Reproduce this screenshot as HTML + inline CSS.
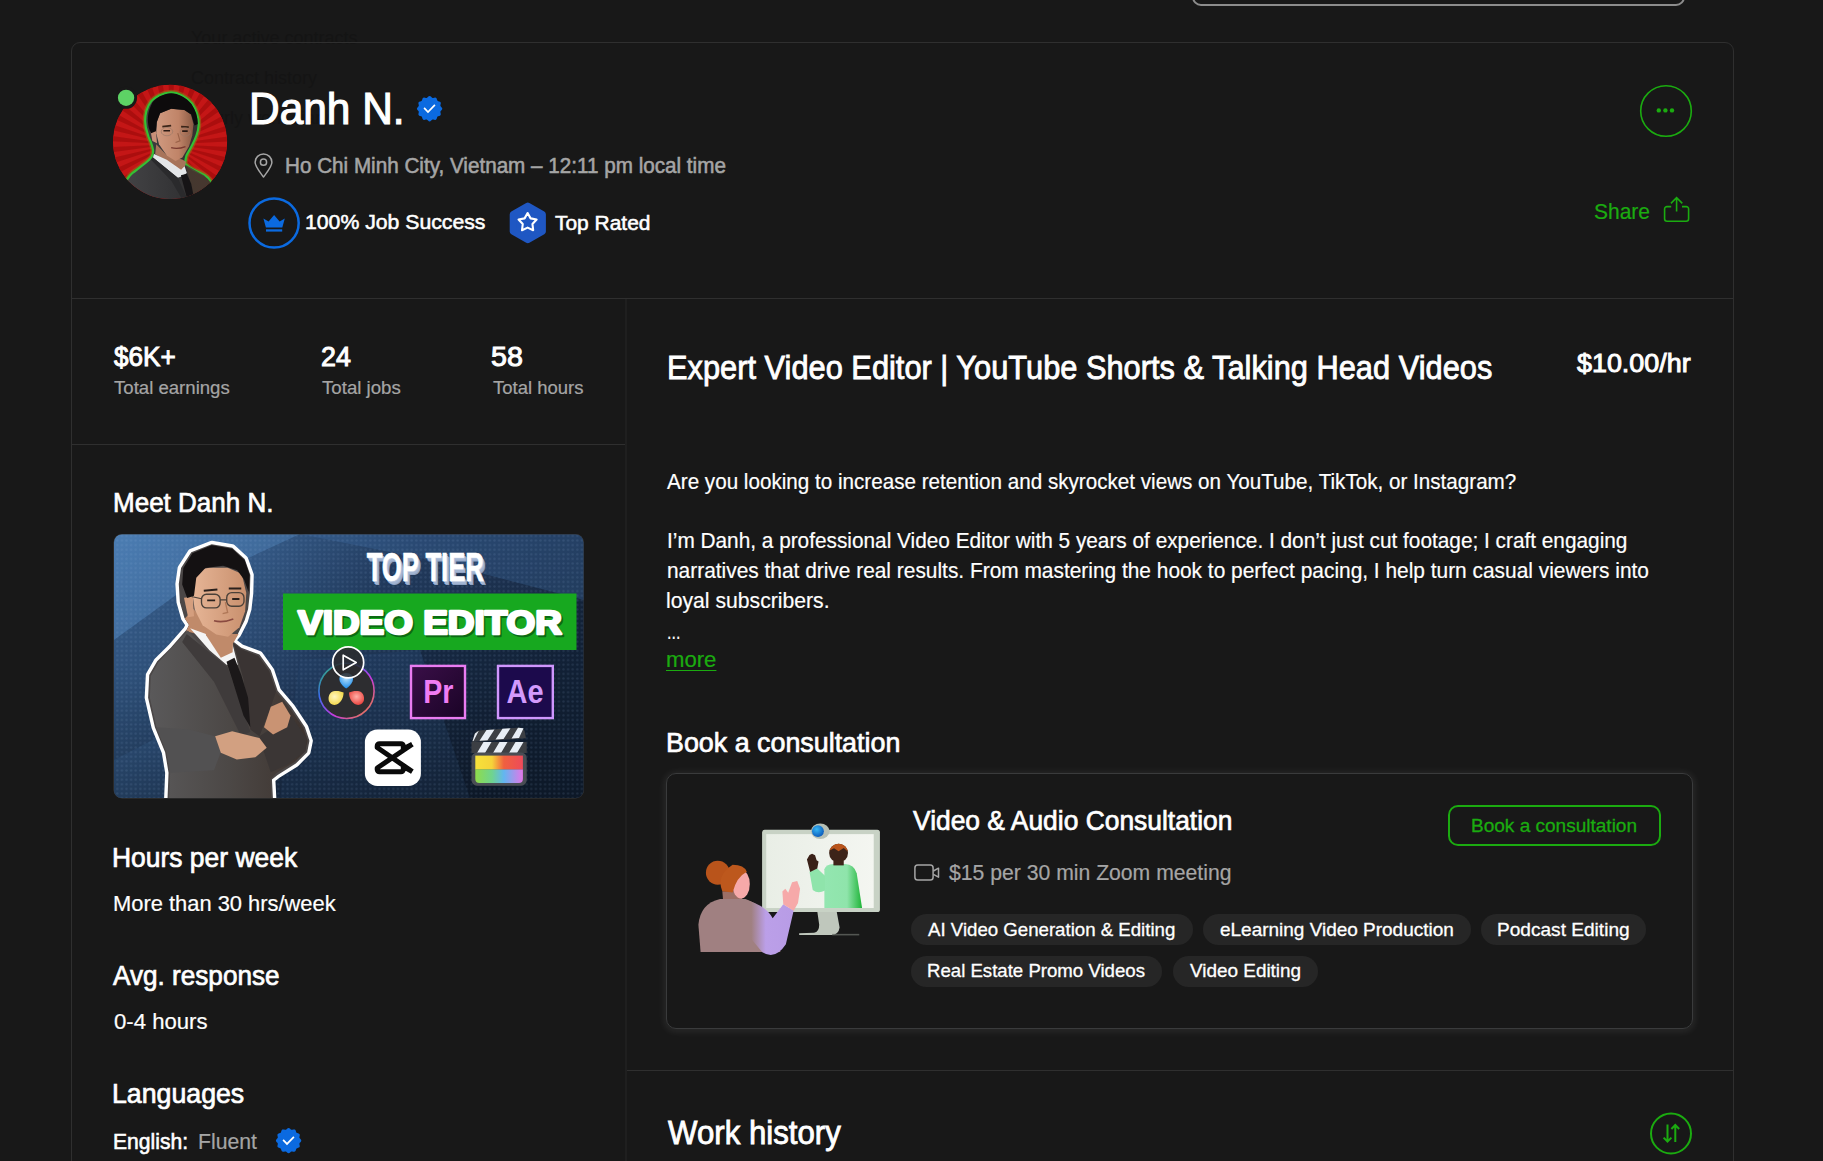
<!DOCTYPE html>
<html lang="en">
<head>
<meta charset="utf-8">
<title>Danh N. – Expert Video Editor</title>
<style>
*{box-sizing:border-box;margin:0;padding:0}
html,body{width:1823px;height:1161px;overflow:hidden;background:#181818}
body{position:relative;font-family:"Liberation Sans",sans-serif;color:#fff;-webkit-font-smoothing:antialiased}
.t{position:absolute;display:block;white-space:nowrap;line-height:1;font-weight:400;transform-origin:0 0}
.abs{position:absolute}
.ghost{position:absolute;white-space:nowrap;line-height:1;color:#141414;font-size:18px}
#search{position:absolute;left:1192px;top:-40px;width:493px;height:46px;border:2px solid #8c8c8c;border-radius:9px}
#card{position:absolute;left:71px;top:42px;width:1663px;height:1200px;border:1px solid #2f2f2f;border-radius:9px}
.hl{position:absolute;height:1px;background:#2f2f2f}
#vl{position:absolute;left:625px;top:299px;width:2px;height:900px;background:#1f1f1f}
.tag{position:absolute;height:31px;border-radius:16px;background:#262626}
#ccard{position:absolute;left:666px;top:773px;width:1027px;height:256px;border:1px solid #3a3b3c;border-radius:10px;box-shadow:0 1px 7px 2px rgba(255,255,255,.075)}
#bbtn{position:absolute;left:1448px;top:805px;width:213px;height:41px;border:2px solid #1bab10;border-radius:10px}
svg{position:absolute;overflow:visible}
</style>
</head>
<body>
<div id="search"></div>
<div class="ghost" style="left:191px;top:29px">Your active contracts</div>
<div class="ghost" style="left:191px;top:69px">Contract history</div>
<div class="ghost" style="left:191px;top:109px">Hourly work diary</div>
<div id="card"></div>
<div class="hl" style="left:72px;top:298px;width:1661px"></div>
<div class="hl" style="left:72px;top:444px;width:553px"></div>
<div class="hl" style="left:627px;top:1070px;width:1106px"></div>
<div id="vl"></div>

<svg width="1823" height="1161" viewBox="0 0 1823 1161" style="left:0;top:0">
<defs><clipPath id="avc"><circle cx="590" cy="580" r="518"/></clipPath><linearGradient id="avsk" x1="0" y1="0" x2="1" y2="0"><stop offset="0" stop-color="#d09a80"/><stop offset=".6" stop-color="#c08468"/><stop offset="1" stop-color="#8a5a44"/></linearGradient><linearGradient id="avsu" x1="0" y1="0" x2="1" y2="0"><stop offset="0" stop-color="#444446"/><stop offset=".6" stop-color="#333335"/><stop offset="1" stop-color="#3a302a"/></linearGradient></defs>
<g transform="translate(105,78) scale(0.11025)">
<g clip-path="url(#avc)">
<circle cx="590" cy="580" r="520" fill="#c41616"/>
<path d="M600 600 L1399 640 L1392 710Z M600 600 L1378 786 L1359 854Z M600 600 L1331 926 L1299 989Z M600 600 L1258 1055 L1216 1111Z M600 600 L1164 1168 L1112 1215Z M600 600 L1050 1262 L990 1299Z M600 600 L920 1333 L855 1358Z M600 600 L780 1379 L711 1392Z M600 600 L634 1399 L564 1399Z M600 600 L486 1392 L417 1379Z M600 600 L343 1358 L277 1332Z M600 600 L208 1297 L148 1260Z M600 600 L87 1214 L35 1166Z M600 600 L-17 1109 L-60 1053Z M600 600 L-100 987 L-132 924Z M600 600 L-159 851 L-179 784Z M600 600 L-193 708 L-199 638Z M600 600 L-199 560 L-192 490Z M600 600 L-178 414 L-159 346Z M600 600 L-131 274 L-99 211Z M600 600 L-58 145 L-16 89Z M600 600 L36 32 L88 -15Z M600 600 L150 -62 L210 -99Z M600 600 L280 -133 L345 -158Z M600 600 L420 -179 L489 -192Z M600 600 L566 -199 L636 -199Z M600 600 L714 -192 L783 -179Z M600 600 L857 -158 L923 -132Z M600 600 L992 -97 L1052 -60Z M600 600 L1113 -14 L1165 34Z M600 600 L1217 91 L1260 147Z M600 600 L1300 213 L1332 276Z M600 600 L1359 349 L1379 416Z M600 600 L1393 492 L1399 562Z" fill="#a50c0c" opacity=".8"/>
<path d="M600 130 C660 130 740 170 790 230 C830 290 850 350 850 420 C848 470 838 500 830 520 C815 560 800 590 790 610 C770 650 750 680 740 700 C728 740 725 760 730 780 C760 810 790 825 800 830 C850 855 880 868 900 880 C935 900 950 920 960 940 L1000 1150 L150 1150 L200 920 C215 895 230 875 250 860 C280 838 300 822 330 800 C370 770 400 745 420 720 C435 700 438 675 435 650 C430 620 422 600 415 580 C400 550 390 525 385 500 C370 460 365 430 365 400 C362 360 368 330 375 300 C385 260 400 235 420 210 C450 175 520 135 600 130Z" fill="none" stroke="#8a7a18" stroke-opacity=".55" stroke-width="46" stroke-linejoin="round"/>
<path d="M600 130 C660 130 740 170 790 230 C830 290 850 350 850 420 C848 470 838 500 830 520 C815 560 800 590 790 610 C770 650 750 680 740 700 C728 740 725 760 730 780 C760 810 790 825 800 830 C850 855 880 868 900 880 C935 900 950 920 960 940 L1000 1150 L150 1150 L200 920 C215 895 230 875 250 860 C280 838 300 822 330 800 C370 770 400 745 420 720 C435 700 438 675 435 650 C430 620 422 600 415 580 C400 550 390 525 385 500 C370 460 365 430 365 400 C362 360 368 330 375 300 C385 260 400 235 420 210 C450 175 520 135 600 130Z" fill="url(#avsu)" stroke="#34c034" stroke-width="20" stroke-linejoin="round"/>
<path d="M735 790 L900 885 L958 945 L900 1100 L800 1080 L760 900Z" fill="#4a3a30" opacity=".8"/>
<path d="M465 600 L560 700 L700 740 L735 760 L725 800 L690 845 L455 690Z" fill="#a8745a"/>
<path d="M445 690 L560 742 L690 832 L722 800 L742 862 L700 892 L660 905 L435 722Z" fill="#e4e6e8"/>
<path d="M688 882 L742 868 L782 960 L802 1062 L742 1085Z" fill="#161416"/>
<path d="M435 722 L660 905 L745 1090 L700 1100 L600 930 L415 740Z" fill="#2a2a2c"/>
<path d="M470 400 L500 320 L600 280 L720 290 L780 330 L802 420 L792 520 L762 620 L702 722 L640 752 L560 702 L490 602 L465 500Z" fill="url(#avsk)"/>
<path d="M413 480 L462 478 L472 592 L430 572Z" fill="#c89078"/>
<path d="M600 138 C660 138 736 176 784 236 C822 292 842 350 842 418 L812 430 L782 332 L720 290 L600 280 L500 320 L470 400 L462 482 L418 500 C400 470 392 440 390 400 C386 340 396 290 430 222 C460 180 525 142 600 138Z" fill="#0d0b0c"/>
<path d="M520 440 L600 432 M690 440 L760 446" stroke="#3a2418" stroke-width="16" fill="none"/>
<path d="M530 478 H590 M700 482 H750" stroke="#2a1a14" stroke-width="14" fill="none"/>
<ellipse cx="562" cy="486" rx="52" ry="38" fill="none" stroke="#9a7a68" stroke-width="6"/>
<ellipse cx="728" cy="490" rx="46" ry="38" fill="none" stroke="#9a7a68" stroke-width="6"/>
<path d="M660 500 L680 570 L640 585" stroke="#9a6248" stroke-width="10" fill="none"/>
<path d="M600 632 Q660 650 730 622" stroke="#7a3a30" stroke-width="12" fill="none"/>
</g>
<circle cx="191" cy="180" r="100" fill="#181818"/>
<circle cx="191" cy="180" r="74" fill="#5dd265"/>
</g></svg>
<svg width="1823" height="1161" viewBox="0 0 1823 1161" style="left:0;top:0">
<path d="M429.60,96.00 L430.42,96.25 L431.16,96.85 L431.83,97.50 L432.50,97.88 L433.27,97.89 L434.17,97.66 L435.12,97.51 L435.95,97.70 L436.53,98.32 L436.87,99.22 L437.13,100.11 L437.52,100.78 L438.19,101.17 L439.08,101.43 L439.98,101.77 L440.60,102.35 L440.79,103.18 L440.64,104.13 L440.41,105.03 L440.42,105.80 L440.80,106.47 L441.45,107.14 L442.05,107.88 L442.30,108.70 L442.05,109.52 L441.45,110.26 L440.80,110.93 L440.42,111.60 L440.41,112.37 L440.64,113.27 L440.79,114.22 L440.60,115.05 L439.98,115.63 L439.08,115.97 L438.19,116.23 L437.52,116.62 L437.13,117.29 L436.87,118.18 L436.53,119.08 L435.95,119.70 L435.12,119.89 L434.17,119.74 L433.27,119.51 L432.50,119.52 L431.83,119.90 L431.16,120.55 L430.42,121.15 L429.60,121.40 L428.78,121.15 L428.04,120.55 L427.37,119.90 L426.70,119.52 L425.93,119.51 L425.03,119.74 L424.08,119.89 L423.25,119.70 L422.67,119.08 L422.33,118.18 L422.07,117.29 L421.68,116.62 L421.01,116.23 L420.12,115.97 L419.22,115.63 L418.60,115.05 L418.41,114.22 L418.56,113.27 L418.79,112.37 L418.78,111.60 L418.40,110.93 L417.75,110.26 L417.15,109.52 L416.90,108.70 L417.15,107.88 L417.75,107.14 L418.40,106.47 L418.78,105.80 L418.79,105.03 L418.56,104.13 L418.41,103.18 L418.60,102.35 L419.22,101.77 L420.12,101.43 L421.01,101.17 L421.68,100.78 L422.07,100.11 L422.33,99.22 L422.67,98.32 L423.25,97.70 L424.08,97.51 L425.03,97.66 L425.93,97.89 L426.70,97.88 L427.37,97.50 L428.04,96.85 L428.78,96.25Z" fill="#0b6ae0"/><path d="M424.10 107.90 L428.00 112.00 L434.90 104.90" fill="none" stroke="#fff" stroke-width="1.7" stroke-linejoin="miter"/>
<path d="M288.60,1127.90 L289.42,1128.15 L290.16,1128.75 L290.83,1129.40 L291.50,1129.78 L292.27,1129.79 L293.17,1129.56 L294.12,1129.41 L294.95,1129.60 L295.53,1130.22 L295.87,1131.12 L296.13,1132.01 L296.52,1132.68 L297.19,1133.07 L298.08,1133.33 L298.98,1133.67 L299.60,1134.25 L299.79,1135.08 L299.64,1136.03 L299.41,1136.93 L299.42,1137.70 L299.80,1138.37 L300.45,1139.04 L301.05,1139.78 L301.30,1140.60 L301.05,1141.42 L300.45,1142.16 L299.80,1142.83 L299.42,1143.50 L299.41,1144.27 L299.64,1145.17 L299.79,1146.12 L299.60,1146.95 L298.98,1147.53 L298.08,1147.87 L297.19,1148.13 L296.52,1148.52 L296.13,1149.19 L295.87,1150.08 L295.53,1150.98 L294.95,1151.60 L294.12,1151.79 L293.17,1151.64 L292.27,1151.41 L291.50,1151.42 L290.83,1151.80 L290.16,1152.45 L289.42,1153.05 L288.60,1153.30 L287.78,1153.05 L287.04,1152.45 L286.37,1151.80 L285.70,1151.42 L284.93,1151.41 L284.03,1151.64 L283.08,1151.79 L282.25,1151.60 L281.67,1150.98 L281.33,1150.08 L281.07,1149.19 L280.68,1148.52 L280.01,1148.13 L279.12,1147.87 L278.22,1147.53 L277.60,1146.95 L277.41,1146.12 L277.56,1145.17 L277.79,1144.27 L277.78,1143.50 L277.40,1142.83 L276.75,1142.16 L276.15,1141.42 L275.90,1140.60 L276.15,1139.78 L276.75,1139.04 L277.40,1138.37 L277.78,1137.70 L277.79,1136.93 L277.56,1136.03 L277.41,1135.08 L277.60,1134.25 L278.22,1133.67 L279.12,1133.33 L280.01,1133.07 L280.68,1132.68 L281.07,1132.01 L281.33,1131.12 L281.67,1130.22 L282.25,1129.60 L283.08,1129.41 L284.03,1129.56 L284.93,1129.79 L285.70,1129.78 L286.37,1129.40 L287.04,1128.75 L287.78,1128.15Z" fill="#0b6ae0"/><path d="M283.10 1139.80 L287.00 1143.90 L293.90 1136.80" fill="none" stroke="#fff" stroke-width="1.7" stroke-linejoin="miter"/>
<path d="M263.5 177 C259.5 171.5 255.1 166.6 255.1 162.3 A8.4 8.4 0 0 1 271.9 162.3 C271.9 166.6 267.5 171.5 263.5 177Z" fill="none" stroke="#a5a5a5" stroke-width="1.5" stroke-linejoin="round"/>
<circle cx="263.5" cy="162.2" r="3.1" fill="none" stroke="#a5a5a5" stroke-width="1.5"/>
<circle cx="274.1" cy="223" r="24.6" fill="none" stroke="#0b6ae0" stroke-width="2.5"/>
<path d="M263.4 218.6 L268.6 221.6 L274.1 215 L279.6 221.6 L284.8 218.6 L282.3 227.4 L265.9 227.4Z" fill="#0b6ae0"/>
<rect x="266" y="229.3" width="16.2" height="2.3" fill="#0b6ae0"/>
<path d="M527.80,205.85 L542.70,214.38 L542.70,231.43 L527.80,239.95 L512.90,231.43 L512.90,214.38Z" fill="#1f57c3" stroke="#1f57c3" stroke-width="6.4" stroke-linejoin="round"/>
<path d="M527.60,213.00 L530.60,218.37 L536.64,219.56 L532.45,224.08 L533.18,230.19 L527.60,227.60 L522.02,230.19 L522.75,224.08 L518.56,219.56 L524.60,218.37Z" fill="none" stroke="#fff" stroke-width="2.1" stroke-linejoin="round"/>
<circle cx="1666" cy="111" r="25.3" fill="none" stroke="#1bab10" stroke-width="1.6"/>
<circle cx="1658.8" cy="110.4" r="2.2" fill="#1bab10"/>
<circle cx="1665.4" cy="110.4" r="2.2" fill="#1bab10"/>
<circle cx="1672" cy="110.4" r="2.2" fill="#1bab10"/>
<path d="M1671.2 206.6 H1667 A2.4 2.4 0 0 0 1664.6 209 V218.8 A2.4 2.4 0 0 0 1667 221.2 H1686.2 A2.4 2.4 0 0 0 1688.6 218.8 V209 A2.4 2.4 0 0 0 1686.2 206.6 H1682" fill="none" stroke="#1bab10" stroke-width="1.6"/>
<path d="M1676.6 211.6 V198 M1670.9 203.4 L1676.6 197.7 L1682.3 203.4" fill="none" stroke="#1bab10" stroke-width="1.6"/>
<rect x="914.9" y="865.1" width="18.2" height="15" rx="2.8" fill="none" stroke="#a5a5a5" stroke-width="1.5"/>
<path d="M933.4 871 L938.5 868.2 V877.2 L933.4 874.4" fill="none" stroke="#a5a5a5" stroke-width="1.5" stroke-linejoin="round"/>
<circle cx="1671" cy="1133.5" r="20" fill="none" stroke="#1bab10" stroke-width="2"/>
<path d="M1667.5 1124.6 V1141 M1663.6 1137.6 L1667.5 1141.6 L1671.4 1137.6" fill="none" stroke="#1bab10" stroke-width="2"/>
<path d="M1675.3 1142 V1125.4 M1671.4 1129 L1675.3 1125 L1679.2 1129" fill="none" stroke="#1bab10" stroke-width="2"/>
</svg>
<svg width="1823" height="1161" viewBox="0 0 1823 1161" style="left:0;top:0" font-family="Liberation Sans, sans-serif">
<defs>
<clipPath id="thc"><rect x="114" y="534.5" width="469.5" height="263.5" rx="8"/></clipPath>
<linearGradient id="thbg" x1="0" y1="0" x2="1" y2="0.45"><stop offset="0" stop-color="#4473a7"/><stop offset=".3" stop-color="#325682"/><stop offset=".55" stop-color="#213a5d"/><stop offset="1" stop-color="#15253c"/></linearGradient>
<linearGradient id="thv" x1="0" y1="0" x2="0" y2="1"><stop offset="0" stop-color="#000" stop-opacity="0"/><stop offset=".5" stop-color="#000" stop-opacity=".05"/><stop offset="1" stop-color="#000" stop-opacity=".3"/></linearGradient>
<pattern id="dots" width="4.6" height="4.6" patternUnits="userSpaceOnUse"><circle cx="2.3" cy="2.3" r="1.2" fill="#9fc0e8" opacity=".12"/></pattern>
<linearGradient id="suit" x1="0" y1="0" x2="1" y2="0"><stop offset="0" stop-color="#5a595a"/><stop offset=".5" stop-color="#4c4846"/><stop offset="1" stop-color="#3d332e"/></linearGradient>
<linearGradient id="skin" x1="0" y1="0" x2="1" y2="0"><stop offset="0" stop-color="#e6b596"/><stop offset="1" stop-color="#c9906e"/></linearGradient>
<linearGradient id="prg" x1="0" y1="0" x2="1" y2="1"><stop offset="0" stop-color="#3a0f48"/><stop offset="1" stop-color="#1a0326"/></linearGradient>
<linearGradient id="rain" x1="0" y1="0" x2="1" y2="0"><stop offset="0" stop-color="#f7e13a"/><stop offset=".35" stop-color="#f5d33a"/><stop offset=".6" stop-color="#f0603f"/><stop offset="1" stop-color="#ee4a5a"/></linearGradient>
<linearGradient id="rain2" x1="0" y1="0" x2="1" y2="0"><stop offset="0" stop-color="#8fdc4a"/><stop offset=".35" stop-color="#6fd48f"/><stop offset=".6" stop-color="#62b6f0"/><stop offset="1" stop-color="#e277e8"/></linearGradient>
<linearGradient id="ring" x1="0" y1="0" x2="1" y2="1"><stop offset="0" stop-color="#31c24a"/><stop offset=".3" stop-color="#3a6df0"/><stop offset=".6" stop-color="#c43ae0"/><stop offset="1" stop-color="#f08a2a"/></linearGradient>
<radialGradient id="pb" cx=".5" cy=".3" r=".7"><stop offset="0" stop-color="#bfe6ff"/><stop offset="1" stop-color="#1b8bea"/></radialGradient>
<radialGradient id="py" cx=".4" cy=".4" r=".7"><stop offset="0" stop-color="#fff6c0"/><stop offset="1" stop-color="#f2d43a"/></radialGradient>
<radialGradient id="prd" cx=".5" cy=".4" r=".7"><stop offset="0" stop-color="#ffb0a8"/><stop offset="1" stop-color="#e8332e"/></radialGradient>
</defs>
<rect x="113.5" y="534" width="470.5" height="264.5" rx="8.5" fill="#3a3a3a"/>
<g clip-path="url(#thc)">
<rect x="114" y="534" width="470" height="265" fill="url(#thbg)"/>
<path d="M114 534 H300 L190 585 L114 640Z" fill="#5a8fc8" opacity=".35"/>
<path d="M114 640 L190 585 L230 700 L114 760Z" fill="#27476f" opacity=".35"/>
<path d="M114 760 L230 700 L260 798 H114Z" fill="#3b6aa3" opacity=".25"/>
<path d="M300 534 H584 V600 L430 560Z" fill="#3f6ea6" opacity=".3"/>
<path d="M420 650 L584 600 V798 H470Z" fill="#0f1c30" opacity=".35"/>
<path d="M300 660 L420 650 L470 798 H280Z" fill="#274b78" opacity=".25"/>
<rect x="114" y="534" width="470" height="265" fill="url(#thv)"/>
<rect x="114" y="534" width="470" height="265" fill="url(#dots)"/>
<g transform="translate(114,534) scale(0.22727)">
<path d="M430 45 L520 60 L575 110 L600 180 L598 260 L590 330 L575 380 L545 440 L520 470 L560 500 L640 530 L690 600 L720 690 L780 760 L840 850 L860 910 L850 960 L800 1010 L720 1060 L695 1080 L700 1175 L235 1175 L240 1050 L225 960 L180 850 L150 720 L155 620 L190 560 L250 500 L320 420 L330 400 L310 370 L290 300 L285 220 L295 150 L340 80Z" fill="#fff" stroke="#fff" stroke-width="30" stroke-linejoin="round"/>
<path d="M430 45 L520 60 L575 110 L600 180 L598 260 L590 330 L575 380 L545 440 L520 470 L560 500 L640 530 L690 600 L720 690 L780 760 L840 850 L860 910 L850 960 L800 1010 L720 1060 L695 1080 L700 1175 L235 1175 L240 1050 L225 960 L180 850 L150 720 L155 620 L190 560 L250 500 L320 420 L330 400 L310 370 L290 300 L285 220 L295 150 L340 80Z" fill="#4b4747"/>
<path d="M312 372 L330 400 L318 428 L405 450 L525 480 L548 440 L450 440 L350 330Z" fill="#c08a6a"/>
<path d="M325 425 L250 505 L195 565 L162 625 L158 720 L187 850 L232 960 L247 1050 L242 1175 L693 1175 L688 1080 L715 1052 L795 1003 L842 955 L852 910 L833 853 L773 765 L713 693 L683 604 L635 537 L560 507 L525 480 L480 600Z" fill="url(#suit)"/>
<path d="M525 480 L560 507 L635 537 L683 604 L713 693 L690 760 L640 890 L600 860 L570 640Z" fill="#3a3433"/>
<path d="M320 440 L500 585 L600 870 L560 890 L440 650 L300 475Z" fill="#3f3b3b"/>
<path d="M640 890 L780 800 L848 900 L842 956 L760 1016 L690 1048 L660 960Z" fill="#3b3635"/>
<path d="M187 850 L232 960 L247 1050 L440 1040 L470 960 L445 890 L330 860Z" fill="#525152"/>
<path d="M335 415 L405 440 L520 480 L545 575 L495 575 L420 512Z" fill="#f4f4f4"/>
<path d="M495 562 L530 545 L560 620 L590 720 L600 850 L570 800 L520 640Z" fill="#1b1819"/>
<path d="M395 395 L525 440 L522 520 L470 545 L405 445Z" fill="#c08a6a"/>
<path d="M350 200 L358 160 L420 148 L500 148 L562 175 L582 260 L577 340 L552 410 L502 452 L450 442 L390 402 L355 332 L345 262Z" fill="url(#skin)"/>
<path d="M308 280 L347 276 L352 362 L326 366Z" fill="#d49e7e"/>
<path d="M430 50 L520 65 L575 115 L597 180 L592 255 L572 200 L542 160 L480 140 L402 150 L362 192 L352 272 L322 282 L300 222 L305 150 L345 85Z" fill="#141112"/>
<rect x="385" y="265" width="82" height="60" rx="22" fill="none" stroke="#4a4038" stroke-width="6"/>
<rect x="496" y="258" width="76" height="60" rx="22" fill="none" stroke="#4a4038" stroke-width="6"/>
<path d="M467 290 H496 M385 285 L340 275" stroke="#4a4038" stroke-width="5" fill="none"/>
<path d="M395 250 L455 244 M505 240 L560 240" stroke="#2a201c" stroke-width="9" fill="none"/>
<path d="M410 292 H445 M520 286 H552" stroke="#2a201c" stroke-width="8" fill="none"/>
<path d="M440 382 Q480 392 525 374" stroke="#8a4a40" stroke-width="7" fill="none"/>
<path d="M490 300 L500 345 L478 350" stroke="#b07858" stroke-width="6" fill="none"/>
<path d="M690 760 L740 738 L777 800 L762 850 L700 882 L660 850Z" fill="#c99373"/>
<path d="M445 890 L520 868 L640 898 L672 940 L622 982 L540 992 L470 962Z" fill="#d2a081"/>
</g>
<text x="369.4" y="584.9" font-size="41.5" font-weight="700" fill="#8fa3c4" textLength="117" lengthAdjust="spacingAndGlyphs">TOP TIER</text>
<text x="368.5" y="583.6" font-size="41.5" font-weight="700" fill="#a3b5d2" textLength="117" lengthAdjust="spacingAndGlyphs">TOP TIER</text>
<text x="367.6" y="582.3" font-size="41.5" font-weight="700" fill="#b7c6de" textLength="117" lengthAdjust="spacingAndGlyphs">TOP TIER</text>
<text x="366.7" y="581" font-size="41.5" font-weight="700" fill="#ffffff" stroke="#fff" stroke-width=".6" textLength="117" lengthAdjust="spacingAndGlyphs">TOP TIER</text>
<rect x="283" y="593.5" width="293.5" height="56.5" fill="#17a81f"/>
<text x="299.6" y="636.0" font-size="33.4" font-weight="700" fill="#0c6a14" stroke="#0c6a14" stroke-width="2.6" stroke-linejoin="round" textLength="264" lengthAdjust="spacingAndGlyphs">VIDEO EDITOR</text>
<text x="298" y="634" font-size="33.4" font-weight="700" fill="#fff" stroke="#fff" stroke-width="2.6" stroke-linejoin="round" textLength="264" lengthAdjust="spacingAndGlyphs">VIDEO EDITOR</text>
<circle cx="346.5" cy="690.9" r="27.6" fill="#2d2d30" stroke="url(#ring)" stroke-width="1.6"/>
<path d="M346.2 673 C352 673 354 677.5 352.6 681.3 C351.4 684.4 348.6 687 346.2 688.6 C343.8 687 341 684.4 339.8 681.3 C338.4 677.5 340.4 673 346.2 673Z" fill="url(#pb)"/>
<path d="M331 692.5 C333.5 690.5 339.5 690.6 343.6 692.6 C343.6 697.5 341.2 702.8 336.6 704.6 C332.8 706 329 703.5 328.6 699.6 C328.3 697 329 694.2 331 692.5Z" fill="url(#py)"/>
<path d="M361.6 692.5 C359.1 690.5 353.1 690.6 349 692.6 C349 697.5 351.4 702.8 356 704.6 C359.8 706 363.6 703.5 364 699.6 C364.3 697 363.6 694.2 361.6 692.5Z" fill="url(#prd)"/>
<circle cx="348.2" cy="662.4" r="15.5" fill="#2c2c2e" fill-opacity=".85" stroke="#fff" stroke-width="1.7"/>
<path d="M343.2 655.2 V669.8 L356.2 662.5Z" fill="none" stroke="#fff" stroke-width="1.7" stroke-linejoin="round"/>
<rect x="411" y="665.9" width="54" height="52.2" fill="url(#prg)" stroke="#ea7cf2" stroke-width="2.4"/>
<text x="423.3" y="702.8" font-size="32.5" font-weight="700" fill="#f07cf4" textLength="30.2" lengthAdjust="spacingAndGlyphs">Pr</text>
<rect x="498" y="665.9" width="54.8" height="52.2" fill="#1c0a4c" stroke="#cf96fd" stroke-width="2.4"/>
<text x="506.6" y="702.8" font-size="34" font-weight="700" fill="#d39afc" textLength="37" lengthAdjust="spacingAndGlyphs">Ae</text>
<rect x="364.9" y="729.6" width="56" height="56.4" rx="12.5" fill="#fff"/>
<path d="M412.3 744.2 L403.3 749 V746 A2.3 2.3 0 0 0 401 743.7 H379.5 A2.3 2.3 0 0 0 377.2 746 V747.5 L412.3 771.6 M412.3 771.6 L403.3 766.6 V769.5 A2.3 2.3 0 0 1 401 771.8 H379.5 A2.3 2.3 0 0 1 377.2 769.5 V768 L412.3 744.2" fill="none" stroke="#0a0a0a" stroke-width="5" stroke-linejoin="round"/>
<g>
<path d="M472 742 L474.2 734.5 Q475.5 731.2 479 730.6 L519 727.6 Q523.5 727.4 524.6 731 L526 738.2Z" fill="#3c3f44"/>
<path d="M479.5 740.8 L486.5 730 L494.5 729.4 L487.5 740.2Z M495.5 739.6 L502.5 728.8 L510.5 728.2 L503.5 739Z M511.5 738.6 L518 727.8 L523.5 728.2 L519 738Z M472.6 741 L475 733.5 L478.8 730.8 L473.5 741Z" fill="#e8eef6"/>
<rect x="471.5" y="742" width="55.2" height="11" fill="#3c3f44"/>
<path d="M477 753 L483.5 742 H491.5 L485 753Z M493 753 L499.5 742 H507.5 L501 753Z M509 753 L515.5 742 H523.5 L517 753Z" fill="#e8eef6"/>
<rect x="471.5" y="752.5" width="55.2" height="33.2" rx="5.5" fill="#494d54"/>
<rect x="475.3" y="755.6" width="47.6" height="14" fill="url(#rain)"/>
<path d="M475.3 769.6 H522.9 V779 Q522.9 783 518.9 783 H479.3 Q475.3 783 475.3 779Z" fill="url(#rain2)"/>
</g>
</g>
</svg>

<div id="ccard"></div>
<svg width="1823" height="1161" viewBox="0 0 1823 1161" style="left:0;top:0">
<defs>
<radialGradient id="lens" cx=".4" cy=".35" r=".7"><stop offset="0" stop-color="#35b6f5"/><stop offset="1" stop-color="#0a56b8"/></radialGradient>
<linearGradient id="grn" x1="0" y1="0" x2="1" y2="0"><stop offset="0" stop-color="#93e6b0"/><stop offset=".6" stop-color="#8fe4ab"/><stop offset="1" stop-color="#1eb437"/></linearGradient>
<linearGradient id="lav" x1="0" y1="0" x2="1" y2="0"><stop offset="0" stop-color="#a08081"/><stop offset=".12" stop-color="#a08081"/><stop offset=".42" stop-color="#bb9fe8"/><stop offset="1" stop-color="#b89ce6"/></linearGradient>
<linearGradient id="scr" x1="0" y1="0" x2="1" y2="0"><stop offset="0" stop-color="#e9eee6"/><stop offset="1" stop-color="#f4f6f1"/></linearGradient>
</defs>
<g transform="translate(690,815) scale(0.1292)">
<path d="M985 745 L1135 745 L1158 870 Q1150 925 1095 928 L845 928 L845 915 L960 912 Q1000 905 1000 850Z" fill="#bfc7bc"/>
<rect x="1100" y="920" width="210" height="12" fill="#6c706b" opacity=".7"/>
<rect x="558" y="115" width="912" height="636" rx="20" fill="#c8d2c5"/>
<rect x="590" y="148" width="832" height="572" fill="url(#scr)"/>
<path d="M1040 420 Q1050 385 1110 380 L1200 380 Q1270 385 1290 450 L1332 720 L1040 720Z" fill="url(#grn)"/>
<path d="M925 440 L985 415 L1045 470 L1045 585 Q990 615 950 580Z" fill="#8fe4ab"/>
<path d="M905 345 L925 310 L945 300 L968 312 L980 350 L995 360 L985 415 L930 442Z" fill="#3a2118"/>
<circle cx="1150" cy="295" r="73" fill="#3d2419"/>
<path d="M1080 275 A73 73 0 0 1 1222 282 L1190 255 L1150 280 L1115 258Z" fill="#b9541b"/>
<rect x="1110" y="355" width="80" height="35" fill="#3d2419"/>
<ellipse cx="1008" cy="125" rx="72" ry="60" fill="#b7c0b5"/>
<circle cx="990" cy="125" r="46" fill="url(#lens)"/>
<path d="M250 590 L400 590 L405 680 L258 680Z" fill="#9c6f66"/>
<ellipse cx="395" cy="535" rx="68" ry="112" fill="#f6a9a9"/>
<circle cx="215" cy="447" r="92" fill="#b9541b"/>
<path d="M330 385 Q420 385 440 440 Q360 480 330 600 L250 590 Q200 470 330 385Z" fill="#bd581d"/>
<path d="M82 1060 L65 850 Q80 685 232 650 L430 650 Q560 700 625 800 L700 1060Z" fill="#a08081"/>
<path d="M430 655 Q590 700 640 800 L722 690 L802 742 L742 1000 Q660 1125 560 1062 L450 930Z" fill="url(#lav)"/>
<path d="M715 592 L738 570 L760 602 L790 520 L830 510 L852 570 L836 682 L802 742 L722 690Z" fill="#f6a9a9"/>
</g></svg>
<div id="bbtn"></div>
<div class="tag" style="left:911px;top:914px;width:282px"></div>
<div class="tag" style="left:1203px;top:914px;width:268px"></div>
<div class="tag" style="left:1481px;top:914px;width:165px"></div>
<div class="tag" style="left:911px;top:956px;width:251px"></div>
<div class="tag" style="left:1173px;top:956px;width:145px"></div>

<h1 class="t" id="t-name" style="left:248.67px;top:86px;font-size:45.2px;color:#ffffff;transform:scaleX(0.9385);-webkit-text-stroke:1.18px #ffffff;">Danh N.</h1>
<p class="t" id="t-loc" style="left:284.70px;top:155px;font-size:21.2px;color:#a5a5a5;transform:scaleX(0.9750);-webkit-text-stroke:0.55px #a5a5a5;">Ho Chi Minh City, Vietnam – 12:11 pm local time</p>
<span class="t" id="t-js" style="left:305.16px;top:211px;font-size:21.0px;color:#ffffff;transform:scaleX(1.0104);-webkit-text-stroke:0.55px #ffffff;">100% Job Success</span>
<span class="t" id="t-tr" style="left:554.77px;top:212px;font-size:21.0px;color:#ffffff;transform:scaleX(0.9968);-webkit-text-stroke:0.55px #ffffff;">Top Rated</span>
<span class="t" id="t-share" style="left:1594.10px;top:202px;font-size:21.3px;color:#1bab10;transform:scaleX(0.9860);-webkit-text-stroke:0.2px #1bab10;">Share</span>
<span class="t" id="t-s1" style="left:114.08px;top:344px;font-size:26.8px;color:#ffffff;transform:scaleX(0.9738);-webkit-text-stroke:0.96px #ffffff;">$6K+</span>
<span class="t" id="t-s1l" style="left:113.70px;top:380px;font-size:17.5px;color:#a5a5a5;transform:scaleX(1.0622);-webkit-text-stroke:0.2px #a5a5a5;">Total earnings</span>
<span class="t" id="t-s2" style="left:320.58px;top:344px;font-size:26.8px;color:#ffffff;transform:scaleX(1.0013);-webkit-text-stroke:0.96px #ffffff;">24</span>
<span class="t" id="t-s2l" style="left:321.50px;top:380px;font-size:17.5px;color:#a5a5a5;transform:scaleX(1.0663);-webkit-text-stroke:0.2px #a5a5a5;">Total jobs</span>
<span class="t" id="t-s3" style="left:491.11px;top:344px;font-size:26.8px;color:#ffffff;transform:scaleX(1.0694);-webkit-text-stroke:0.96px #ffffff;">58</span>
<span class="t" id="t-s3l" style="left:492.60px;top:380px;font-size:17.5px;color:#a5a5a5;transform:scaleX(1.0565);-webkit-text-stroke:0.2px #a5a5a5;">Total hours</span>
<h3 class="t" id="t-meet" style="left:112.53px;top:489px;font-size:27.1px;color:#ffffff;transform:scaleX(0.9601);-webkit-text-stroke:0.7px #ffffff;">Meet Danh N.</h3>
<h3 class="t" id="t-hpw" style="left:112.40px;top:844px;font-size:27.1px;color:#ffffff;transform:scaleX(0.9756);-webkit-text-stroke:0.7px #ffffff;">Hours per week</h3>
<p class="t" id="t-hpwv" style="left:113.08px;top:894px;font-size:21.5px;color:#ffffff;transform:scaleX(1.0181);-webkit-text-stroke:0.2px #ffffff;">More than 30 hrs/week</p>
<h3 class="t" id="t-avg" style="left:113.45px;top:962px;font-size:27.1px;color:#ffffff;transform:scaleX(0.9642);-webkit-text-stroke:0.7px #ffffff;">Avg. response</h3>
<p class="t" id="t-avgv" style="left:113.70px;top:1012px;font-size:21.5px;color:#ffffff;transform:scaleX(1.0302);-webkit-text-stroke:0.2px #ffffff;">0-4 hours</p>
<h3 class="t" id="t-lang" style="left:112.38px;top:1080px;font-size:27.1px;color:#ffffff;transform:scaleX(0.9860);-webkit-text-stroke:0.7px #ffffff;">Languages</h3>
<span class="t" id="t-eng" style="left:113.28px;top:1131px;font-size:21.2px;color:#ffffff;transform:scaleX(0.9953);-webkit-text-stroke:0.55px #ffffff;">English:</span>
<span class="t" id="t-flu" style="left:197.81px;top:1132px;font-size:21.5px;color:#a5a5a5;transform:scaleX(0.9867);-webkit-text-stroke:0.2px #a5a5a5;">Fluent</span>
<h2 class="t" id="t-title" style="left:667.23px;top:352px;font-size:32.6px;color:#ffffff;transform:scaleX(0.9454);-webkit-text-stroke:0.85px #ffffff;">Expert Video Editor | YouTube Shorts &amp; Talking Head Videos</h2>
<span class="t" id="t-rate" style="left:1576.86px;top:351px;font-size:25.2px;color:#ffffff;transform:scaleX(1.0674);-webkit-text-stroke:0.91px #ffffff;">$10.00/hr</span>
<p class="t" id="t-d1" style="left:667.00px;top:472px;font-size:21.5px;color:#ffffff;transform:scaleX(0.9599);-webkit-text-stroke:0.2px #ffffff;">Are you looking to increase retention and skyrocket views on YouTube, TikTok, or Instagram?</p>
<p class="t" id="t-d2" style="left:666.73px;top:531px;font-size:21.5px;color:#ffffff;transform:scaleX(0.9674);-webkit-text-stroke:0.2px #ffffff;">I’m Danh, a professional Video Editor with 5 years of experience. I don’t just cut footage; I craft engaging</p>
<p class="t" id="t-d3" style="left:666.73px;top:561px;font-size:21.5px;color:#ffffff;transform:scaleX(0.9713);-webkit-text-stroke:0.2px #ffffff;">narratives that drive real results. From mastering the hook to perfect pacing, I help turn casual viewers into</p>
<p class="t" id="t-d4" style="left:666.32px;top:591px;font-size:21.5px;color:#ffffff;transform:scaleX(0.9847);-webkit-text-stroke:0.2px #ffffff;">loyal subscribers.</p>
<p class="t" id="t-dots" style="left:667.00px;top:622px;font-size:20px;color:#ffffff;transform:scaleX(0.8007);-webkit-text-stroke:0.2px #ffffff;">...</p>
<a class="t" id="t-more" href="#" style="left:666.47px;top:650px;font-size:21.5px;color:#1bab10;transform:scaleX(1.0292);-webkit-text-stroke:0.2px #1bab10;text-decoration:underline;text-underline-offset:3px;text-decoration-thickness:1.4px;">more</a>
<h3 class="t" id="t-book" style="left:666.17px;top:729px;font-size:27.1px;color:#ffffff;transform:scaleX(0.9910);-webkit-text-stroke:0.7px #ffffff;">Book a consultation</h3>
<h4 class="t" id="t-vac" style="left:912.55px;top:807px;font-size:27.1px;color:#ffffff;transform:scaleX(0.9741);-webkit-text-stroke:0.7px #ffffff;">Video &amp; Audio Consultation</h4>
<p class="t" id="t-zoom" style="left:948.50px;top:863px;font-size:21.4px;color:#a5a5a5;transform:scaleX(0.9899);-webkit-text-stroke:0.2px #a5a5a5;">$15 per 30 min Zoom meeting</p>
<span class="t" id="t-btn" style="left:1471.03px;top:817px;font-size:18.5px;color:#1bab10;transform:scaleX(1.0282);-webkit-text-stroke:0.31px #1bab10;">Book a consultation</span>
<span class="t" id="t-g1" style="left:928.25px;top:921px;font-size:18.5px;color:#ffffff;transform:scaleX(1.0074);-webkit-text-stroke:0.31px #ffffff;">AI Video Generation &amp; Editing</span>
<span class="t" id="t-g2" style="left:1219.95px;top:921px;font-size:18.5px;color:#ffffff;transform:scaleX(1.0254);-webkit-text-stroke:0.31px #ffffff;">eLearning Video Production</span>
<span class="t" id="t-g3" style="left:1496.92px;top:921px;font-size:18.5px;color:#ffffff;transform:scaleX(1.0316);-webkit-text-stroke:0.31px #ffffff;">Podcast Editing</span>
<span class="t" id="t-g4" style="left:927.45px;top:962px;font-size:18.5px;color:#ffffff;transform:scaleX(1.0061);-webkit-text-stroke:0.31px #ffffff;">Real Estate Promo Videos</span>
<span class="t" id="t-g5" style="left:1189.75px;top:962px;font-size:18.5px;color:#ffffff;transform:scaleX(1.0221);-webkit-text-stroke:0.31px #ffffff;">Video Editing</span>
<h2 class="t" id="t-wh" style="left:668.22px;top:1117px;font-size:32.6px;color:#ffffff;transform:scaleX(0.9581);-webkit-text-stroke:0.85px #ffffff;">Work history</h2>
</body>
</html>
